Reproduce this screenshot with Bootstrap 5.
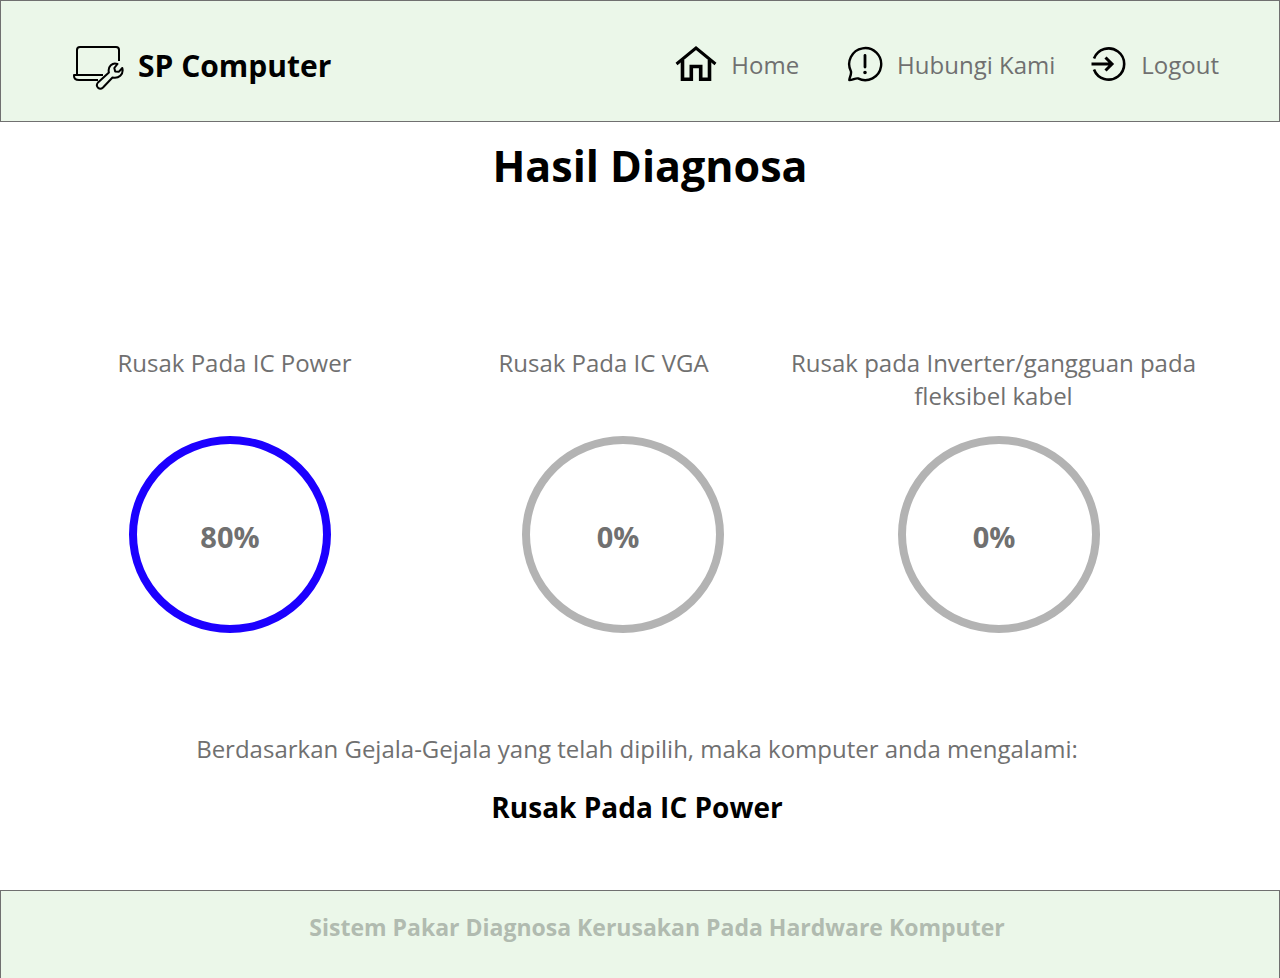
<!DOCTYPE html>
<html lang="id">
<head>
<meta charset="utf-8">
<meta name="viewport" content="width=device-width, initial-scale=1">
<title>SP Computer - Hasil Diagnosa</title>
<link href="https://cdn.jsdelivr.net/npm/bootstrap@5.3.0/dist/css/bootstrap.min.css" rel="stylesheet">
<style>
body { font-family: "Open Sans", "Noto Sans", sans-serif; font-size: 24px; line-height: 33px; color: #707070; background: #fff; }
.band { background: #ebf7e9; border: 1px solid #707070; }
.site-header { min-height: 122px; padding: 10px 60px 0 72px; }
.brand { gap: 14px; font-size: 30px; line-height: 40px; }
.site-nav { column-gap: 36px; padding-bottom: 4px; }
.site-nav a { color: #707070; gap: 14px; }
.site-nav a:first-child { margin-right: 12px; }
.page-title { font-size: 43px; line-height: 60px; padding: 14px 0 0 20px; margin-bottom: 150px; }
.result-labels { display: grid; grid-template-columns: 469fr 269fr 511fr 31fr; min-height: 66px; }
.result-labels span:nth-child(3) { padding: 0 48px; }
.result-rings { display: grid; grid-template-columns: 460fr 326fr 426fr 68fr; padding-top: 24px; }
.ring { width: 202px; height: 197px; border: 8px solid #b3b3b3; border-radius: 50%; font-size: 29px; padding: 4px 10px 0 0; }
.ring-hit { border-color: #1c00ff; padding-right: 0; }
.summary { padding-top: 99px; padding-right: 6px; }
.verdict { font-size: 28px; line-height: 40px; padding-top: 22px; }
.site-footer { min-height: 88px; border-bottom: 0; padding: 20px 0 20px 34px; font-size: 23px; color: #b1bbb0; }
</style>
</head>
<body class="d-flex flex-column min-vh-100">
<header class="band site-header d-flex flex-wrap align-items-center justify-content-between">
  <a href="#" class="brand d-flex align-items-center fw-bold text-black text-decoration-none">
    <svg width="51" height="48" viewBox="0 0 51 48" fill="none" stroke="#000" stroke-width="2" stroke-linejoin="round" aria-hidden="true">
      <path d="M4 32V8q0-3 3-3h36q3 0 3 3v11"/>
      <path d="M30 33H1v1q0 4 5 4h19"/>
      <path d="M44.500 22c-5-2-10 2.500-8.600 8.500L25 40.500c-3.200 4 1.600 8.200 5 5L39.500 35.500c6 1.500 11.500-3 9.800-9.500L46 29.700l-3.800-.2-.9-3.500z"/>
    </svg>
    <span>SP Computer</span>
  </a>
  <nav class="site-nav d-flex flex-wrap">
    <a href="#" class="d-flex align-items-center text-decoration-none">
      <svg width="42" height="36" viewBox="0 0 42 36" fill="none" stroke="#000" stroke-width="3.600" aria-hidden="true">
        <path d="M1.500 18 21 2l19.500 16" stroke-width="3"/>
        <path d="M7.500 14v19.200h8.800V20.500h9.400v12.700h8.800V14"/>
      </svg>
      <span>Home</span>
    </a>
    <a href="#" class="d-flex align-items-center text-decoration-none">
      <svg width="36" height="36" viewBox="0 0 36 36" fill="none" stroke="#000" stroke-width="2.400" stroke-linecap="round" stroke-linejoin="round" aria-hidden="true">
        <path d="M4 25.500A16 16 0 1 1 11 32.400C8 32 6 34 2.300 34 2.500 31 4.500 29 4 25.500z"/>
        <path d="M18 9.500v11.500" stroke-width="2.800"/><circle cx="18" cy="26.500" r="1" fill="#000" stroke-width="1.600"/>
      </svg>
      <span>Hubungi Kami</span>
    </a>
    <a href="#" class="d-flex align-items-center text-decoration-none">
      <svg width="36" height="36" viewBox="0 0 36 36" fill="none" stroke="#000" stroke-width="2.600" aria-hidden="true">
        <path d="M3 12.500A15.600 15.600 0 1 1 3 23.500"/>
        <path d="M.5 18H21M14.500 11.500 21 18l-6.500 6.500" stroke-width="3"/>
      </svg>
      <span>Logout</span>
    </a>
  </nav>
</header>
<main class="flex-grow-1 text-center">
  <h1 class="page-title fw-bold text-black">Hasil Diagnosa</h1>
  <section class="result-labels">
    <span id="r1">Rusak Pada IC Power</span>
    <span id="r2">Rusak Pada IC VGA</span>
    <span id="r3">Rusak pada Inverter/gangguan pada fleksibel kabel</span>
  </section>
  <section class="result-rings">
    <div class="ring ring-hit mx-auto d-flex align-items-center justify-content-center fw-bold" aria-describedby="r1">80%</div>
    <div class="ring mx-auto d-flex align-items-center justify-content-center fw-bold" aria-describedby="r2">0%</div>
    <div class="ring mx-auto d-flex align-items-center justify-content-center fw-bold" aria-describedby="r3">0%</div>
  </section>
  <section class="summary">
    <p class="mb-0">Berdasarkan Gejala-Gejala yang telah dipilih, maka komputer anda mengalami:</p>
    <p class="verdict mb-0 fw-bold text-black">Rusak Pada IC Power</p>
  </section>
</main>
<footer class="band site-footer text-center fw-bold">Sistem Pakar Diagnosa Kerusakan Pada Hardware Komputer</footer>
<script src="https://cdn.jsdelivr.net/npm/bootstrap@5.3.0/dist/js/bootstrap.bundle.min.js"></script>
</body>
</html>
